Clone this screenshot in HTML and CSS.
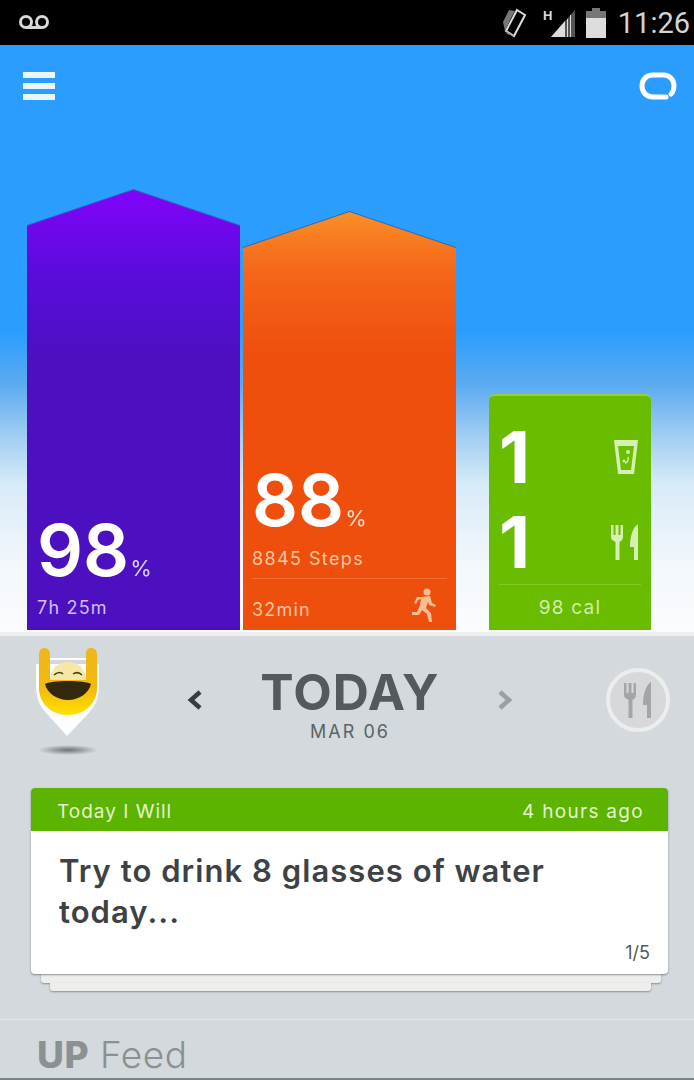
FILE: index.html
```html
<!DOCTYPE html>
<html lang="en">
<head>
    <meta charset="UTF-8">
    <meta name="viewport" content="width=device-width, initial-scale=1.0">
    <title>UP</title>
    <link rel="stylesheet" href="styles.css">
</head>
<body>
    <div class="status-bar">
        <svg class="voicemail" width="32" height="18" viewBox="0 0 32 18">
            <circle cx="8" cy="8" r="5.5"/>
            <circle cx="24" cy="8" r="5.5"/>
            <path d="M8 13.5h16"/>
        </svg>
        <div class="status-right">
            <svg width="28" height="32" viewBox="0 0 28 32">
                <path d="M17 3l8 5-11 21-8-5z" fill="none" stroke="#ddd" stroke-width="2"/>
                <path d="M9 3L3 15l2 9 6-13 4-7z" fill="#777"/>
                <path d="M6 24l8 5 2 1-9-3z" fill="#888"/>
            </svg>
            <svg class="signal" width="34" height="32" viewBox="0 0 34 32">
                <text x="0" y="13" class="signal-h">H</text>
                <path d="M8 30L32 3v27z" fill="#555"/>
                <path d="M8 30l14-16v16z" fill="#ddd"/>
                <path d="M24 12h1v18h-1zM27 8h1v22h-1z" fill="#ddd"/>
            </svg>
            <svg width="20" height="30" viewBox="0 0 20 30">
                <path d="M6 0h8v3h6v27H0V3h6z" fill="#777"/>
                <path d="M0 10h20v20H0z" fill="#ddd"/>
            </svg>
            <span class="clock">11:26</span>
        </div>
    </div>

    <div class="sky">
        <div class="top-bar">
            <div class="menu-icon"><span></span><span></span><span></span></div>
            <svg width="38" height="28" viewBox="0 0 38 28">
                <path d="M27 25H14C7 25 3 20 3 14S7 3 14 3h10c7 0 11 5 11 11 0 3-1 6-3 8" fill="none" stroke="#fff" stroke-width="5" stroke-linecap="round"/>
            </svg>
        </div>

        <div class="bars">
            <div class="bar-wrap">
                <div class="bar bar-sleep">
                    <div class="big-num">98<small>%</small></div>
                    <div class="bar-foot"><span>7h 25m</span></div>
                </div>
            </div>
            <div class="bar-wrap">
                <div class="bar bar-move">
                    <div class="big-num">88<small>%</small></div>
                    <div class="bar-sub">8845 Steps</div>
                    <div class="bar-foot ruled">
                        <span>32min</span>
                        <svg width="26" height="34" viewBox="0 0 26 34" fill="#f7bd94">
                            <circle cx="16" cy="4" r="3.5"/>
                            <path d="M11 9l8-1 2 7 4 2-1 2-6-2-1-3-2 6 5 5 1 9h-3l-2-8-5-4-3 5-7 0 0-3 5 0 3-7 1-6-3 1-2 4-2-1 3-6z"/>
                        </svg>
                    </div>
                </div>
            </div>
            <div class="bar bar-food">
                <div class="food-row">
                    <span class="food-num">1</span>
                    <svg width="26" height="36" viewBox="0 0 26 36">
                        <path d="M1 1h24l-4 34H5z" fill="#d6f0b4"/>
                        <path d="M5 7h16l-3 24H8z" fill="#6cbf00"/>
                        <circle cx="15" cy="13" r="2" fill="#d6f0b4"/>
                        <circle cx="11" cy="22" r="1.5" fill="#d6f0b4"/>
                        <path d="M15 18c1 3-1 6-3 6" fill="none" stroke="#d6f0b4" stroke-width="1.5"/>
                    </svg>
                </div>
                <div class="food-row">
                    <span class="food-num">1</span>
                    <svg width="28" height="36" viewBox="0 0 28 36" fill="#d6f0b4">
                        <path d="M0 1h2.500v10h2V1h3v10h2V1H12v12c0 3-2 4-3.500 5v18h-4V18C3 17 0 16 0 13z"/>
                        <path d="M27 0v36h-4V23h-4C19 12 22 3 27 0z"/>
                    </svg>
                </div>
                <div class="bar-foot ruled center"><span>98 cal</span></div>
            </div>
        </div>
    </div>

    <div class="panel">
        <div class="day-row">
            <svg class="pin" width="64" height="108" viewBox="0 0 64 108">
                <defs>
                    <linearGradient id="faceFill" x1="0" y1="0" x2="0" y2="1">
                        <stop offset="0" stop-color="#eeb61c"/>
                        <stop offset="0.6" stop-color="#f3b90f"/>
                        <stop offset="1" stop-color="#ffe000"/>
                    </linearGradient>
                    <radialGradient id="pinShadow">
                        <stop offset="0" stop-color="#6d7274"/>
                        <stop offset="1" stop-color="#6d7274" stop-opacity="0"/>
                    </radialGradient>
                </defs>
                <ellipse cx="32" cy="102" rx="30" ry="5" fill="url(#pinShadow)"/>
                <path d="M0 38c0 16 6 22 12 29l19 21 20-21c6-7 12-13 12-29V10H0z" fill="#fff" fill-opacity="0.95"/>
                <path d="M0 0h14v12h36V0h14v16H0z" fill="#d3d9dc"/>
                <path d="M3 6c0-4 3-6 5.500-6S14 2 14 6v24h36V6c0-4 2-6 5-6s6 2 6 6v34c0 16-13 27-29 27S3 56 3 40z" fill="url(#faceFill)"/>
                <path d="M14 32c1-12 8-18 18-18s17 6 18 18z" fill="#f7e7a6"/>
                <path d="M18 27c3-3 7-3 9-1M37 26c3-2 6-2 9 1" fill="none" stroke="#4a3a10" stroke-width="1.500"/>
                <path d="M9 36c6-4 40-4 46 0-2 9-12 16-23 16S11 45 9 36z" fill="#33280c"/>
            </svg>
            <div class="day-nav">
                <svg width="16" height="22" viewBox="0 0 16 22">
                    <path d="M13 3L4 11l9 8" fill="none" stroke="#383c40" stroke-width="4.500"/>
                </svg>
                <div class="day-title">
                    <div class="today">TODAY</div>
                    <div class="date">MAR 06</div>
                </div>
                <svg width="16" height="22" viewBox="0 0 16 22">
                    <path d="M3 3l9 8-9 8" fill="none" stroke="#9a9fa2" stroke-width="4.500"/>
                </svg>
            </div>
            <div class="food-btn">
                <svg width="28" height="36" viewBox="0 0 28 36" fill="#a3a6a8">
                    <path d="M0 1h2.500v10h2V1h3v10h2V1H12v12c0 3-2 4-3.500 5v18h-4V18C3 17 0 16 0 13z"/>
                    <path d="M27 0v36h-4V23h-4C19 12 22 3 27 0z"/>
                </svg>
            </div>
        </div>

        <div class="card-stack">
            <div class="card">
                <div class="card-head">
                    <span>Today I Will</span>
                    <span class="card-time">4 hours ago</span>
                </div>
                <div class="card-body">
                    <p>Try to drink 8 glasses of water today...</p>
                    <div class="pager">1/5</div>
                </div>
            </div>
            <div class="sheet sheet-one"></div>
            <div class="sheet sheet-two"></div>
        </div>

        <div class="feed-title"><b>UP</b> Feed</div>
    </div>
</body>
</html>
```

FILE: styles.css
```css
html, body {
    margin: 0;
    padding: 0;
}
body {
    width: 694px;
    height: 1080px;
    overflow: hidden;
    font-family: Inter, "Liberation Sans", sans-serif;
    background-color: #d3d9dc;
}

/* status bar */
.status-bar {
    height: 45px;
    background-color: #000;
    display: flex;
    justify-content: space-between;
    align-items: center;
    padding: 0 4px 0 18px;
    box-sizing: border-box;
}
.voicemail {
    fill: none;
    stroke: #d8d8d8;
    stroke-width: 3;
}
.status-right {
    display: flex;
    align-items: center;
    gap: 9px;
}
.signal {
    margin-left: 6px;
}
.signal-h {
    font-family: "Liberation Sans", sans-serif;
    font-size: 13px;
    font-weight: bold;
    fill: #ddd;
}
.clock {
    font-family: Roboto, sans-serif;
    font-size: 29px;
    color: #d4d4d4;
    margin-left: 3px;
}

/* sky + bars */
.sky {
    height: 587px;
    box-sizing: border-box;
    background: linear-gradient(#2a9dff 0, #2a9dff 285px, #5cabf0 340px, #a6d0f3 395px, #d8ebf8 440px, #f2f8fc 520px, #fafcfe 587px);
    display: flex;
    flex-direction: column;
    justify-content: space-between;
}
.top-bar {
    display: flex;
    justify-content: space-between;
    align-items: flex-start;
    padding: 27px 17px 0 23px;
}
.menu-icon {
    width: 32px;
    display: flex;
    flex-direction: column;
    gap: 5px;
}
.menu-icon span {
    height: 6px;
    background-color: #eaf6ff;
}
.bars {
    display: flex;
    align-items: flex-end;
    padding: 0 0 2px 27px;
}
.bar-wrap {
    filter: drop-shadow(0 -1px 0 rgba(50, 80, 150, 0.7));
    margin-right: 3px;
}
.bar {
    box-sizing: border-box;
    color: #fff;
    display: flex;
    flex-direction: column;
    justify-content: flex-end;
}
.bar-sleep {
    width: 213px;
    height: 440px;
    padding: 0 9px 0 10px;
    clip-path: polygon(0 36px, 50% 0, 100% 36px, 100% 100%, 0 100%);
    background: linear-gradient(#8203fb 0, #5b0cdd 80px, #4c10c0 170px);
}
.bar-move {
    width: 213px;
    height: 418px;
    padding: 0 9px;
    clip-path: polygon(0 36px, 50% 0, 100% 36px, 100% 100%, 0 100%);
    background: linear-gradient(#fb8e26 0, #f4661a 60px, #ef4f0c 140px);
}
.big-num {
    font-size: 72px;
    font-weight: 600;
    line-height: 72px;
}
.big-num small {
    font-size: 22px;
    font-weight: 400;
    line-height: 1;
    margin-left: 1px;
    opacity: 0.8;
}
.bar-move .big-num {
    margin-bottom: 12px;
}
.bar-sub {
    font-size: 18px;
    line-height: 22px;
    letter-spacing: 1.4px;
    color: #f9c6a2;
}
.bar-foot {
    display: flex;
    justify-content: space-between;
    align-items: center;
    height: 44px;
    font-size: 18px;
    letter-spacing: 1.2px;
    box-sizing: border-box;
    padding-bottom: 1px;
}
.bar-sleep .bar-foot {
    color: #d3bdf5;
}
.bar-move .bar-foot {
    color: #f9c6a2;
    margin-top: 8px;
    height: 52px;
    padding: 0 10px 0 0;
}
.bar-move .bar-foot span {
    margin-top: 10px;
}
.ruled {
    border-top: 1px solid rgba(255, 255, 255, 0.18);
}
.bar-food {
    width: 162px;
    height: 236px;
    margin-left: 30px;
    padding: 0 10px;
    border-radius: 6px 6px 0 0;
    border-top: 2px solid #8fd23a;
    background-color: #69bc00;
}
.food-row {
    display: flex;
    justify-content: space-between;
    align-items: center;
    height: 85px;
    padding-right: 2px;
}
.food-num {
    font-size: 72px;
    font-weight: 700;
    line-height: 72px;
}
.center {
    justify-content: center;
    color: #d2edae;
    font-size: 19px;
    height: 46px;
    margin-top: 0;
}

/* bottom panel */
.panel {
    height: 448px;
    box-sizing: border-box;
    border-top: 4px solid #eef0f0;
    border-bottom: 2px solid #7d8488;
    background-color: #d3d9dc;
}
.day-row {
    height: 152px;
    box-sizing: border-box;
    display: flex;
    align-items: flex-start;
    padding: 12px 0 0 36px;
}
.day-nav {
    width: 326px;
    margin-left: 87px;
    margin-top: 19px;
    display: flex;
    justify-content: space-between;
    align-items: center;
}
.day-nav svg {
    margin-bottom: 9px;
}
.day-title {
    text-align: center;
}
.today {
    font-size: 50px;
    font-weight: 700;
    line-height: 50px;
    letter-spacing: 1px;
    color: #55595c;
}
.date {
    font-size: 18px;
    line-height: 20px;
    letter-spacing: 2px;
    color: #5d6265;
    margin-top: 5px;
}
.food-btn {
    width: 64px;
    height: 64px;
    box-sizing: border-box;
    margin-left: 93px;
    margin-top: 20px;
    border: 4px solid #eceeee;
    border-radius: 50%;
    background-color: #d6d8d9;
    display: flex;
    justify-content: center;
    align-items: center;
}

.card-stack {
    margin: 0 26px 0 31px;
}
.card {
    border-radius: 4px;
    overflow: hidden;
    background-color: #fff;
    box-shadow: 0 1px 2px rgba(0, 0, 0, 0.4);
    position: relative;
}
.card-head {
    height: 43px;
    display: flex;
    justify-content: space-between;
    align-items: center;
    padding: 3px 24px 0 26px;
    box-sizing: border-box;
    background-color: #5cb300;
    color: #e4f3d0;
    font-size: 19px;
    letter-spacing: 1px;
}
.card-time {
    letter-spacing: 1.3px;
}
.card-body {
    height: 143px;
    box-sizing: border-box;
    padding: 19px 18px 0 28px;
    color: #3e4245;
}
.card-body p {
    margin: 0;
    height: 84px;
    font-size: 31px;
    font-weight: 600;
    line-height: 41px;
    letter-spacing: 1.05px;
    padding-right: 40px;
}
.pager {
    text-align: right;
    font-size: 18px;
    margin-top: 8px;
    color: #55595c;
}
.sheet {
    background-color: #eeeeec;
    border-radius: 0 0 3px 3px;
    box-shadow: 0 1px 2px rgba(0, 0, 0, 0.35);
}
.sheet-one {
    height: 9px;
    margin: 0 7px 0 10px;
}
.sheet-two {
    height: 8px;
    margin: 0 17px 0 19px;
}
.feed-title {
    margin-top: 28px;
    border-top: 1px solid #e4e8ea;
    padding: 15px 0 0 37px;
    font-size: 37px;
    font-weight: 300;
    line-height: 40px;
    letter-spacing: 0.5px;
    color: #8b9093;
}
.feed-title b {
    font-weight: 800;
}
```
